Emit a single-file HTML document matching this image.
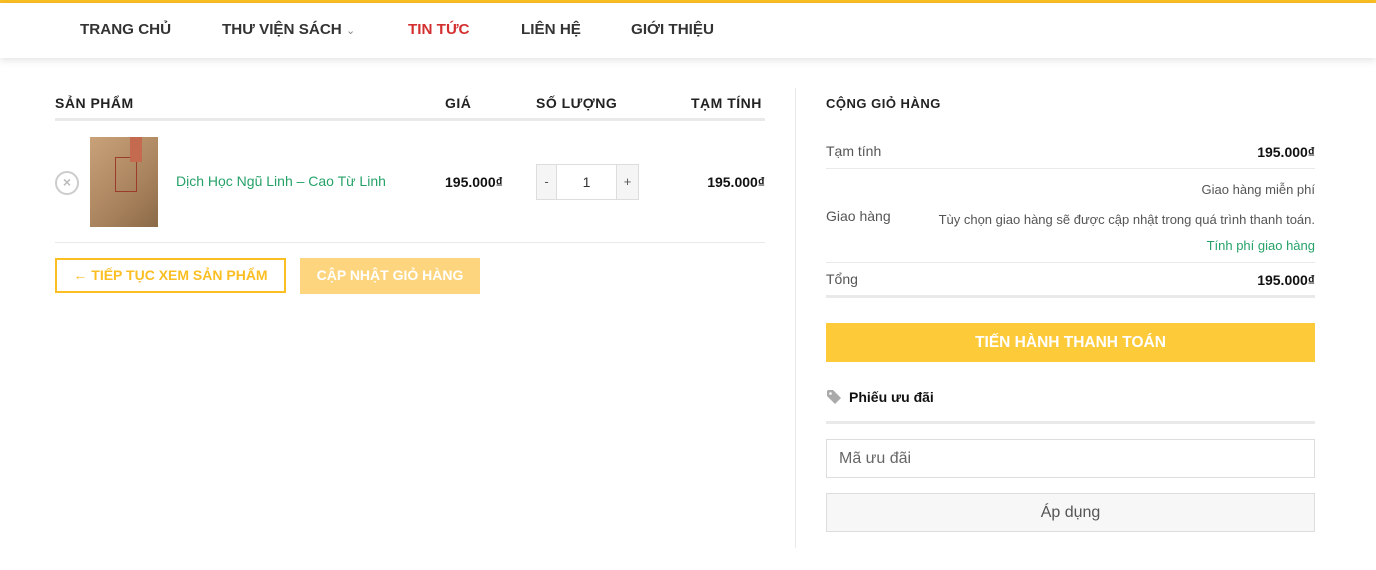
<!DOCTYPE html>
<html><head><meta charset="utf-8"><style>
*{margin:0;padding:0;box-sizing:border-box}
body{width:1376px;height:570px;background:#fff;font-family:"Liberation Sans",Arial,sans-serif;position:relative;overflow:hidden;color:#222}
.a{position:absolute;white-space:nowrap}
.top{position:absolute;left:0;top:0;width:1376px;height:3px;background:#fbbf24}
.nav{position:absolute;left:0;top:3px;width:1376px;height:55px;background:#fff;box-shadow:0 2px 8px rgba(0,0,0,.12)}
.nav span{position:absolute;top:18px;font-size:15.2px;font-weight:bold;color:#333}
.h{font-size:14px;font-weight:bold;letter-spacing:.5px;color:#222}
.line{position:absolute;background:#e9e9e9}
.g{color:#555;font-size:14px}
.b{font-weight:bold;font-size:14px;color:#111}
</style></head><body>
<div class="top"></div>
<div class="nav">
<span style="left:80px">TRANG CHỦ</span>
<span style="left:222px">THƯ VIỆN SÁCH <span style="position:static;font-weight:normal;font-size:11px;color:#888">&#8964;</span></span>
<span style="left:408px;color:#d32f2f">TIN TỨC</span>
<span style="left:521px">LIÊN HỆ</span>
<span style="left:631px">GIỚI THIỆU</span>
</div>

<div class="a h" style="left:55px;top:95px">SẢN PHẨM</div>
<div class="a h" style="left:445px;top:95px">GIÁ</div>
<div class="a h" style="left:536px;top:95px">SỐ LƯỢNG</div>
<div class="a h" style="left:691px;top:95px">TẠM TÍNH</div>
<div class="line" style="left:55px;top:118px;width:710px;height:3px"></div>

<div class="a" style="left:55px;top:171px;width:24px;height:24px;border:2px solid #ccc;border-radius:50%;color:#bbb;font-size:14px;line-height:19px;text-align:center;font-weight:bold">×</div>
<div class="a" style="left:90px;top:137px;width:68px;height:90px;background:linear-gradient(135deg,#c9a27a,#a9835d 60%,#8c6a48);"><div style="position:absolute;left:25px;top:20px;width:22px;height:35px;border:1px solid #9b3b2a"></div><div style="position:absolute;left:40px;top:0;width:12px;height:25px;background:#c46a4f"></div></div>
<div class="a" style="left:176px;top:173px;font-size:14px;color:#26a269">Dịch Học Ngũ Linh – Cao Từ Linh</div>
<div class="a b" style="left:445px;top:174px">195.000₫</div>
<div class="a" style="left:536px;top:164px;width:103px;height:36px;border:1px solid #ddd;display:flex">
<div style="width:20px;background:#f5f5f5;border-right:1px solid #ddd;text-align:center;line-height:34px;font-size:13px;color:#555">-</div>
<div style="flex:1;text-align:center;line-height:34px;font-size:14px;color:#333">1</div>
<div style="width:22px;background:#f5f5f5;border-left:1px solid #ddd;text-align:center;line-height:34px;font-size:13px;color:#555">+</div></div>
<div class="a b" style="right:611px;top:174px">195.000₫</div>
<div class="line" style="left:55px;top:242px;width:710px;height:1px"></div>

<div class="a" style="left:55px;top:258px;width:231px;height:35px;border:2px solid #fbbf24;color:#fbbf24;font-weight:bold;font-size:14px;text-align:center;line-height:31px">← TIẾP TỤC XEM SẢN PHẨM</div>
<div class="a" style="left:300px;top:258px;width:180px;height:36px;background:#fcd57e;color:#fff;font-weight:bold;font-size:14px;text-align:center;line-height:34px">CẬP NHẬT GIỎ HÀNG</div>

<div class="line" style="left:795px;top:88px;width:1px;height:460px"></div>

<div class="a h" style="left:826px;top:96px;font-size:13px">CỘNG GIỎ HÀNG</div>
<div class="a g" style="left:826px;top:143px">Tạm tính</div>
<div class="a b" style="right:61px;top:144px">195.000₫</div>
<div class="line" style="left:826px;top:168px;width:489px;height:1px"></div>
<div class="a" style="right:61px;top:182px;font-size:13px;color:#555">Giao hàng miễn phí</div>
<div class="a g" style="left:826px;top:208px">Giao hàng</div>
<div class="a" style="right:61px;top:212px;font-size:13px;color:#555">Tùy chọn giao hàng sẽ được cập nhật trong quá trình thanh toán.</div>
<div class="a" style="right:61px;top:238px;font-size:13px;color:#26a269">Tính phí giao hàng</div>
<div class="line" style="left:826px;top:262px;width:489px;height:1px"></div>
<div class="a g" style="left:826px;top:271px">Tổng</div>
<div class="a b" style="right:61px;top:272px">195.000₫</div>
<div class="line" style="left:826px;top:295px;width:489px;height:3px"></div>

<div class="a" style="left:826px;top:323px;width:489px;height:39px;background:#fdcb3a;color:#fff;font-weight:bold;font-size:15.5px;text-align:center;line-height:39px">TIẾN HÀNH THANH TOÁN</div>

<svg class="a" style="left:826px;top:389px" width="16" height="16" viewBox="0 0 16 16"><path d="M1 2 L1 7 L9 15 L15 9 L7 1 L2 1 Z" fill="#aaa"/><circle cx="4.5" cy="4.5" r="1.3" fill="#fff"/></svg>
<div class="a" style="left:849px;top:389px;font-weight:bold;font-size:14px;color:#111">Phiếu ưu đãi</div>
<div class="line" style="left:826px;top:421px;width:489px;height:3px"></div>
<div class="a" style="left:826px;top:439px;width:489px;height:39px;border:1px solid #ddd;padding-left:12px;line-height:37px;font-size:16px;color:#666">Mã ưu đãi</div>
<div class="a" style="left:826px;top:493px;width:489px;height:39px;border:1px solid #ddd;background:#f7f7f7;text-align:center;line-height:37px;font-size:16px;color:#555">Áp dụng</div>
</body></html>
